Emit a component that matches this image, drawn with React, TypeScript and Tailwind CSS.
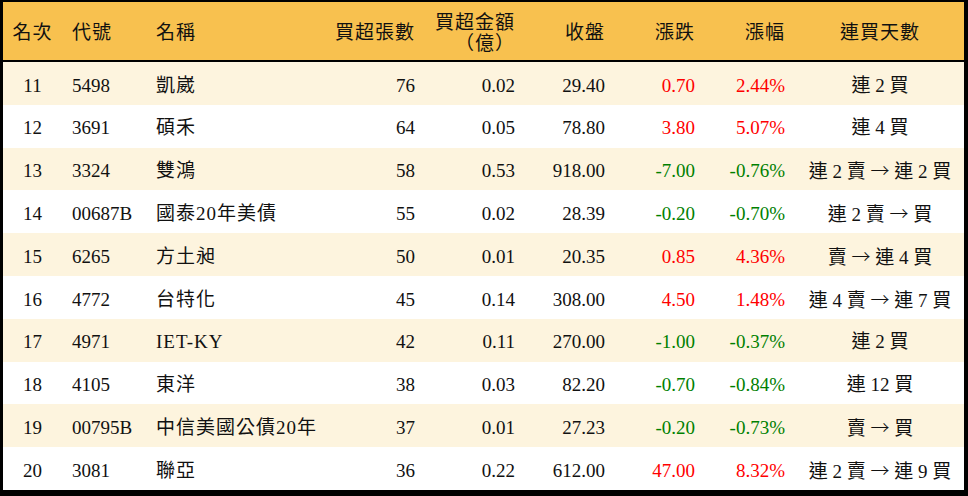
import React from "react";

type Row = {
  rank: number;
  code: string;
  name: string;
  lots: number;
  amount: string;
  close: string;
  change: string;
  pct: string;
  days: string;
};

const rows: Row[] = [
  { rank: 11, code: "5498", name: "凱崴", lots: 76, amount: "0.02", close: "29.40", change: "0.70", pct: "2.44%", days: "連 2 買" },
  { rank: 12, code: "3691", name: "碩禾", lots: 64, amount: "0.05", close: "78.80", change: "3.80", pct: "5.07%", days: "連 4 買" },
  { rank: 13, code: "3324", name: "雙鴻", lots: 58, amount: "0.53", close: "918.00", change: "-7.00", pct: "-0.76%", days: "連 2 賣 → 連 2 買" },
  { rank: 14, code: "00687B", name: "國泰20年美債", lots: 55, amount: "0.02", close: "28.39", change: "-0.20", pct: "-0.70%", days: "連 2 賣 → 買" },
  { rank: 15, code: "6265", name: "方土昶", lots: 50, amount: "0.01", close: "20.35", change: "0.85", pct: "4.36%", days: "賣 → 連 4 買" },
  { rank: 16, code: "4772", name: "台特化", lots: 45, amount: "0.14", close: "308.00", change: "4.50", pct: "1.48%", days: "連 4 賣 → 連 7 買" },
  { rank: 17, code: "4971", name: "IET-KY", lots: 42, amount: "0.11", close: "270.00", change: "-1.00", pct: "-0.37%", days: "連 2 買" },
  { rank: 18, code: "4105", name: "東洋", lots: 38, amount: "0.03", close: "82.20", change: "-0.70", pct: "-0.84%", days: "連 12 買" },
  { rank: 19, code: "00795B", name: "中信美國公債20年", lots: 37, amount: "0.01", close: "27.23", change: "-0.20", pct: "-0.73%", days: "賣 → 買" },
  { rank: 20, code: "3081", name: "聯亞", lots: 36, amount: "0.22", close: "612.00", change: "47.00", pct: "8.32%", days: "連 2 賣 → 連 9 買" },
];

// 欄寬對齊截圖的文字邊緣
const grid = "grid grid-cols-[59px_85px_153px_115px_100px_90px_90px_90px_179px]";

// 箭頭用全形字型，寬度才接近原圖
const Days = ({ text }: { text: string }) => {
  const parts = text.split("→");
  return (
    <>
      {parts.map((p, i) => (
        <React.Fragment key={i}>
          {i > 0 && (
            <span style={{ fontFamily: '"Noto Sans CJK TC", sans-serif' }} className="font-light">
              →
            </span>
          )}
          {p}
        </React.Fragment>
      ))}
    </>
  );
};

export default function App() {
  return (
    <div
      className="w-[968px] h-[496px] bg-black pt-[2px] pl-[3px] pr-[4px] pb-[4px] text-[19px] text-[#111]"
      style={{ fontFamily: '"Liberation Serif", "Noto Sans CJK TC", serif' }}
    >
      <div className="bg-white">
        {/* 表頭 */}
        <div className={`${grid} h-[60px] pt-[4px] items-center bg-[#f8c14f] border-b-2 border-black tracking-[1px]`}>
          <div className="text-center">名次</div>
          <div className="pl-[10px]">代號</div>
          <div className="pl-[9px]">名稱</div>
          <div className="text-right">買超張數</div>
          <div className="flex flex-col items-end leading-[21px]">
            <span>買超金額</span>
            <span>（億）</span>
          </div>
          <div className="text-right">收盤</div>
          <div className="text-right">漲跌</div>
          <div className="text-right">漲幅</div>
          <div className="text-center pl-[11px]">連買天數</div>
        </div>

        {rows.map((r, i) => {
          const up = !r.change.startsWith("-");
          const tone = up ? "text-[#ff0000]" : "text-[#008000]";
          return (
            <div
              key={r.rank}
              className={`${grid} h-[42.8px] pt-[5px] items-center ${i % 2 === 0 ? "bg-[#fdf4de]" : "bg-white"}`}
            >
              <div className="text-center">{r.rank}</div>
              <div className="pl-[10px]">{r.code}</div>
              <div className="pl-[9px] whitespace-nowrap tracking-[1px]">{r.name}</div>
              <div className="text-right">{r.lots}</div>
              <div className="text-right">{r.amount}</div>
              <div className="text-right">{r.close}</div>
              <div className={`text-right ${tone}`}>{r.change}</div>
              <div className={`text-right ${tone}`}>{r.pct}</div>
              <div className="text-center pl-[11px] whitespace-nowrap">
                <Days text={r.days} />
              </div>
            </div>
          );
        })}
      </div>
    </div>
  );
}
